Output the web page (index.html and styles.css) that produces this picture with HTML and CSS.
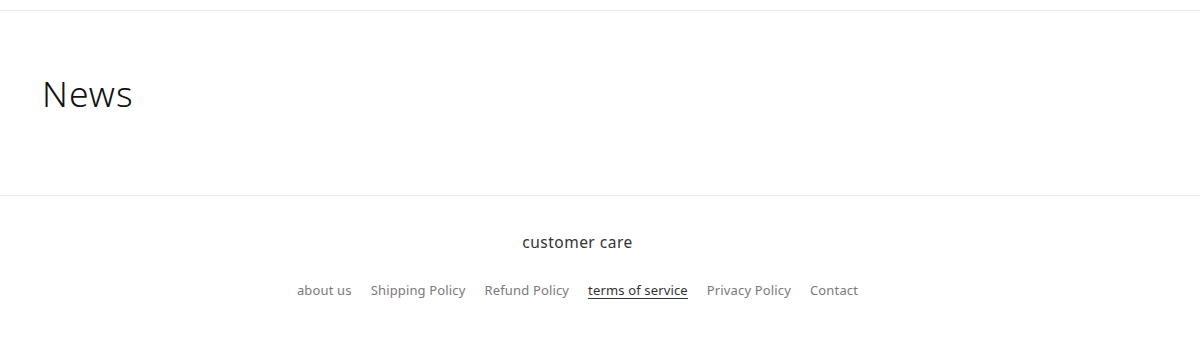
FILE: index.html
```html
<!DOCTYPE html>
<html lang="en">
    <head>
        <title>News</title>
        <link rel="stylesheet" href="styles.css">
    </head>
    <body>
<div class="header-strip"></div>
<main class="page">
    <h1 class="title">News</h1>
</main>
<footer class="footer">
    <h2 class="footer-heading">customer care</h2>
    <ul class="footer-menu">
        <li><a href="#">about us</a></li>
        <li><a href="#">Shipping Policy</a></li>
        <li><a href="#">Refund Policy</a></li>
        <li><a href="#" class="active">terms of service</a></li>
        <li><a href="#">Privacy Policy</a></li>
        <li><a href="#">Contact</a></li>
    </ul>
</footer>
    </body>
</html>
```

FILE: styles.css
```css
body {
    margin: 0;
    font-family: "Noto Sans", sans-serif;
    color: #121212;
    background: #fff;
}
.header-strip {
    height: 10px;
    border-bottom: 1px solid #ebebeb;
}
.page {
    padding: 60px 42px 0;
    height: 124px;
}
.title {
    margin: 0;
    font-weight: 300;
    font-size: 35.5px;
    line-height: 44px;
    letter-spacing: 1px;
    color: #121212;
}
.footer {
    border-top: 1px solid #ebebeb;
    padding: 36px 45px 0 0;
    text-align: center;
}
.footer-heading {
    margin: 0;
    font-weight: 400;
    font-size: 15.5px;
    line-height: 20px;
    letter-spacing: 0.5px;
    color: #333;
}
.footer-menu {
    list-style: none;
    margin: 26px 0 0 0;
    padding: 0;
    display: flex;
    justify-content: center;
    gap: 19px;
}
.footer-menu a {
    font-size: 13px;
    line-height: 18px;
    letter-spacing: 0.15px;
    color: #7a7a7a;
    text-decoration: none;
}
.footer-menu a.active {
    color: #333;
    text-decoration: underline;
    text-underline-offset: 3px;
}
```
